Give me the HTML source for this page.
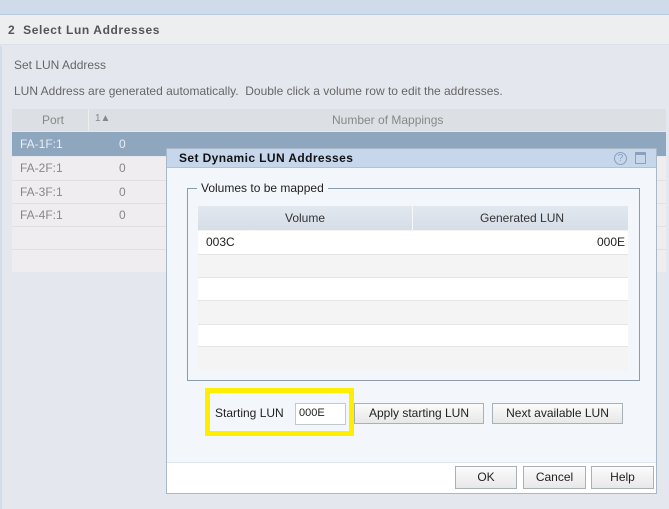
<!DOCTYPE html>
<html><head><style>
*{margin:0;padding:0;box-sizing:border-box}
body{width:669px;height:509px;overflow:hidden;background:#e4e8ee;font-family:"Liberation Sans",sans-serif;font-size:12px;color:#555;position:relative}
.a{position:absolute}
.t{position:absolute;white-space:nowrap}
.btn{position:absolute;background:linear-gradient(#fbfbfb,#e8e8e8);border:1px solid #a8b0b8;color:#222;text-align:center;font-size:12px}
</style></head><body>
<div class="a" style="left:0;top:0;width:669px;height:15px;background:#cfdbea;border-bottom:1px solid #b9c9dc"></div>
<div class="a" style="left:0;top:15px;width:669px;height:30px;background:#eceef0;border-bottom:1px solid #dde2e8"></div>
<div class="t" style="left:8px;top:23px;font-weight:bold;color:#555;font-size:12px;letter-spacing:.6px">2&nbsp; Select Lun Addresses</div>
<div class="a" style="left:0;top:46px;width:2px;height:463px;background:#d3dce7"></div>
<div class="t" style="left:14px;top:58px;color:#666">Set LUN Address</div>
<div class="t" style="left:14px;top:84px;color:#666">LUN Address are generated automatically.&nbsp; Double click a volume row to edit the addresses.</div>
<div class="a" style="left:12px;top:109px;width:654px;height:22px;background:#dcdfe3"></div>
<div class="a" style="left:88px;top:109px;width:1px;height:22px;background:#eee"></div>
<div class="t" style="left:42px;top:113px;color:#888">Port</div>
<div class="t" style="left:95px;top:113px;color:#888;font-size:10px">1▲</div>
<div class="t" style="left:332px;top:113px;color:#888">Number of Mappings</div>
<div class="a" style="left:12px;top:132px;width:654px;height:24px;background:#8ea6be"></div>
<div class="t" style="left:20px;top:137px;color:#e8eef5">FA-1F:1</div><div class="t" style="left:119px;top:137px;color:#e8eef5">0</div>
<div class="a" style="left:12px;top:157px;width:654px;height:115px;background:#efedef"></div>
<div class="a" style="left:12px;top:180px;width:654px;height:1px;background:#e2dfe2"></div>
<div class="a" style="left:12px;top:203px;width:654px;height:1px;background:#e2dfe2"></div>
<div class="a" style="left:12px;top:226px;width:654px;height:1px;background:#e2dfe2"></div>
<div class="a" style="left:12px;top:249px;width:654px;height:1px;background:#e2dfe2"></div>
<div class="t" style="left:20px;top:161px;color:#888">FA-2F:1</div><div class="t" style="left:119px;top:161px;color:#888">0</div>
<div class="t" style="left:20px;top:185px;color:#888">FA-3F:1</div><div class="t" style="left:119px;top:185px;color:#888">0</div>
<div class="t" style="left:20px;top:208px;color:#888">FA-4F:1</div><div class="t" style="left:119px;top:208px;color:#888">0</div>

<div class="a" style="left:166px;top:148px;width:491px;height:346px;background:#f3f6fb;border:1px solid #a9b8c8"></div>
<div class="a" style="left:167px;top:149px;width:489px;height:19px;background:#c6d7ec;border-bottom:1px solid #b0c2d8"></div>
<div class="t" style="left:179px;top:151px;font-weight:bold;color:#111;letter-spacing:.4px">Set Dynamic LUN Addresses</div>
<div class="a" style="left:614px;top:152px;width:13px;height:13px;border:1px solid #8aa0bc;border-radius:50%;color:#8aa0bc;font-size:10px;text-align:center;line-height:11px">?</div>
<div class="a" style="left:635px;top:152px;width:11px;height:12px;border:1px solid #8aa0bc;border-top-width:3px"></div>
<div class="a" style="left:187px;top:188px;width:453px;height:193px;border:1px solid #8b9cb0"></div>
<div class="t" style="left:197px;top:181px;background:#f3f6fb;padding:0 4px;color:#222">Volumes to be mapped</div>
<div class="a" style="left:198px;top:206px;width:430px;height:164px;background:#f4f4f4"></div>
<div class="a" style="left:198px;top:206px;width:430px;height:24px;background:linear-gradient(#e2e8f0,#d6dde6)"></div>
<div class="a" style="left:412px;top:206px;width:1px;height:24px;background:#f5f7fa"></div>
<div class="t" style="left:285px;top:211px;color:#333">Volume</div>
<div class="t" style="left:480px;top:211px;color:#333">Generated LUN</div>
<div class="a" style="left:198px;top:231px;width:430px;height:23px;background:#fff"></div>
<div class="a" style="left:198px;top:277px;width:430px;height:24px;background:#fff;border-top:1px solid #e6e6e6;border-bottom:1px solid #e6e6e6"></div>
<div class="a" style="left:198px;top:324px;width:430px;height:23px;background:#fff;border-top:1px solid #e6e6e6;border-bottom:1px solid #e6e6e6"></div>
<div class="a" style="left:198px;top:254px;width:430px;height:1px;background:#e6e6e6"></div>
<div class="t" style="left:206px;top:235px;color:#222">003C</div>
<div class="t" style="left:597px;top:235px;color:#222">000E</div>

<div class="a" style="left:205px;top:388px;width:149px;height:48px;border:5px solid #ffee00"></div>
<div class="t" style="left:215px;top:406px;color:#222">Starting LUN</div>
<div class="a" style="left:295px;top:403px;width:51px;height:22px;background:#fff;border:1px solid #c0c8d0"></div>
<div class="t" style="left:299px;top:407px;color:#222;font-size:11px">000E</div>
<div class="btn" style="left:354px;top:403px;width:130px;height:21px;line-height:19px">Apply starting LUN</div>
<div class="btn" style="left:492px;top:403px;width:131px;height:21px;line-height:19px">Next available LUN</div>
<div class="a" style="left:167px;top:462px;width:489px;height:31px;background:#fff;border-top:1px solid #dfe5ec"></div>
<div class="btn" style="left:455px;top:466px;width:62px;height:23px;line-height:21px">OK</div>
<div class="btn" style="left:523px;top:466px;width:63px;height:23px;line-height:21px">Cancel</div>
<div class="btn" style="left:591px;top:466px;width:63px;height:23px;line-height:21px">Help</div>
</body></html>
